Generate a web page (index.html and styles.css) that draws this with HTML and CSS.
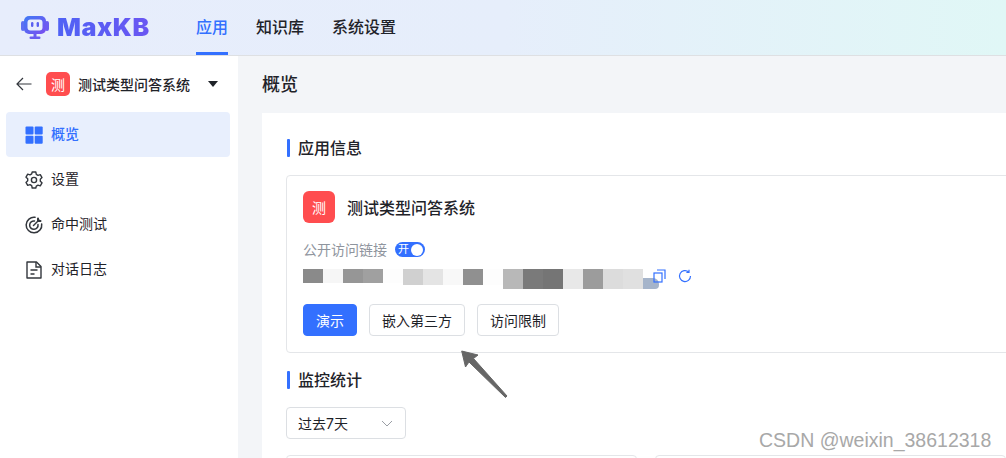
FILE: index.html
```html
<!DOCTYPE html>
<html lang="zh">
<head>
<meta charset="utf-8">
<title>MaxKB</title>
<link rel="stylesheet" href="styles.css">
</head>
<body>
<header class="topbar">
  <div class="logo">
    <svg class="logo-icon" width="30" height="26" viewBox="0 0 30 26">
      <defs><linearGradient id="lg" x1="0" y1="0" x2="1" y2="1"><stop offset="0" stop-color="#3f7bf5"/><stop offset="1" stop-color="#7b4df0"/></linearGradient></defs>
      <rect x="1" y="7" width="4" height="10" rx="2" fill="#5d6ff2"/>
      <rect x="25" y="7" width="4" height="10" rx="2" fill="#6a5cf0"/>
      <rect x="4" y="2" width="22" height="18" rx="5" fill="url(#lg)"/>
      <rect x="7.500" y="5.500" width="15" height="11" rx="3" fill="#e8eefc"/>
      <rect x="11" y="8" width="2.400" height="5" rx="1.200" fill="#5a60f0"/>
      <rect x="16.600" y="8" width="2.400" height="5" rx="1.200" fill="#5a60f0"/>
      <rect x="13.500" y="20" width="3" height="3" fill="#6a5cf0"/>
      <rect x="9.500" y="22.500" width="11" height="2.400" rx="1.200" fill="#6a5cf0"/>
    </svg>
    <span class="logo-text">MaxKB</span>
  </div>
  <nav class="topnav">
    <a class="topnav-item active">应用</a>
    <a class="topnav-item">知识库</a>
    <a class="topnav-item">系统设置</a>
  </nav>
</header>
<div class="body-row">
  <aside class="sidebar">
    <div class="app-switch">
      <svg class="back" width="16" height="14" viewBox="0 0 16 14"><path d="M15.500 7H1M7 1 1 7l6 6" fill="none" stroke="#33373d" stroke-width="1.200"/></svg>
      <span class="avatar small">测</span>
      <span class="app-name">测试类型问答系统</span>
      <span class="caret"></span>
    </div>
    <ul class="menu">
      <li class="menu-item selected">
        <svg width="18" height="18" viewBox="0 0 18 18"><g fill="#3370ff"><rect x="0.500" y="0.500" width="8" height="8" rx="1"/><rect x="9.700" y="0.500" width="8" height="8" rx="1"/><rect x="0.500" y="9.700" width="8" height="8" rx="1"/><rect x="9.700" y="9.700" width="8" height="8" rx="1"/></g></svg>
        <span class="menu-label">概览</span>
      </li>
      <li class="menu-item">
        <svg width="18" height="18" viewBox="0 0 18 18" fill="none" stroke="#33373d" stroke-width="1.400" stroke-linejoin="round"><path d="M7.200 1h3.600l.5 2.300 1.700 1 2.300-.7 1.700 3-1.700 1.600v2l1.700 1.600-1.700 3-2.300-.7-1.700 1L10.800 17H7.200l-.5-2.300-1.700-1-2.300.7-1.700-3 1.700-1.600v-2L1 6.200l1.700-3 2.300.7 1.700-1z"/><circle cx="9" cy="9" r="2.600"/></svg>
        <span class="menu-label">设置</span>
      </li>
      <li class="menu-item">
        <svg width="18" height="18" viewBox="0 0 18 18" fill="none" stroke="#33373d" stroke-width="1.500" stroke-linecap="round"><path d="M10 1.300A7.800 7.800 0 1 0 16.700 8"/><path d="M9.500 5A4.200 4.200 0 1 0 13 8.500"/><path d="M8.500 9.500 14 4"/><path d="M13 2.500v2.500h2.500" stroke-width="2"/></svg>
        <span class="menu-label">命中测试</span>
      </li>
      <li class="menu-item">
        <svg width="18" height="18" viewBox="0 0 18 18" fill="none" stroke="#33373d" stroke-width="1.400"><path d="M2 1h9.500L16 5.500V17H2z" stroke-linejoin="round"/><path d="M11 1v5h5M5.500 9h7M5.500 13h4"/></svg>
        <span class="menu-label">对话日志</span>
      </li>
    </ul>
  </aside>
  <main class="main">
    <h1 class="page-title">概览</h1>
    <section class="panel">
      <h2 class="section-title">应用信息</h2>
      <div class="card">
        <div class="card-head">
          <span class="avatar large">测</span>
          <span class="card-name">测试类型问答系统</span>
        </div>
        <div class="public-row">
          <span class="public-label">公开访问链接</span>
          <span class="switch"><span class="switch-text">开</span><span class="switch-knob"></span></span>
        </div>
        <div class="url-row">
          <div class="mosaic">
            <i class="m a"></i><i class="m b"></i><i class="m c"></i><i class="m d"></i><i class="m e"></i><i class="m f mid"></i><i class="m g mid"></i><i class="m h mid"></i><i class="m i mid"></i><i class="m e mid"></i><i class="m j tall"></i><i class="m k tall"></i><i class="m l tall"></i><i class="m n tall"></i><i class="m o tall"></i><i class="m p tall"></i><i class="m q tall"></i><i class="m r"></i>
          </div>
          <svg class="url-icon copy" width="13" height="14" viewBox="0 0 13 14" fill="none" stroke="#3370ff" stroke-width="1.200"><rect x="1" y="4" width="8" height="9"/><path d="M4 1h8v9"/></svg>
          <svg class="url-icon" width="14" height="14" viewBox="0 0 14 14" fill="none" stroke="#3370ff" stroke-width="1.200"><path d="M12.500 7A5.500 5.500 0 1 1 10.700 3"/><path d="M11 .8V3.400H8.400"/></svg>
        </div>
        <div class="actions">
          <button class="btn primary">演示</button>
          <button class="btn">嵌入第三方</button>
          <button class="btn">访问限制</button>
        </div>
      </div>
      <h2 class="section-title second">监控统计</h2>
      <div class="select">过去7天
        <svg width="12" height="7" viewBox="0 0 12 7" fill="none" stroke="#9a9ea5" stroke-width="1"><path d="M1 1l5 5 5-5"/></svg>
      </div>
      <div class="stats">
        <div class="stat"></div>
        <div class="stat"></div>
      </div>
    </section>
  </main>
</div>
<svg class="pointer" width="52" height="52" viewBox="0 0 52 52"><path d="M1.700 2 18 6l-4.500 3.500L47 47l-1.500 1.500L9 13l-3.500 5z" fill="#666" stroke="#666" stroke-width="1" stroke-linejoin="round"/></svg>
<div class="watermark">CSDN @weixin_38612318</div>
</body>
</html>
```
FILE: styles.css
```css
* { box-sizing: border-box; }
html, body { margin: 0; height: 100%; }
body {
  width: 1006px;
  height: 458px;
  overflow: hidden;
  position: relative;
  font-family: Inter, "Noto Sans CJK SC", sans-serif;
  color: #1f2329;
  background: #fff;
}
.topbar {
  height: 56px;
  display: flex;
  align-items: stretch;
  padding-left: 20px;
  background: linear-gradient(90deg, #e7edfc 0%, #e6eefb 50%, #e0f7f6 100%);
  border-bottom: 1px solid #dee0e3;
}
.logo { display: flex; align-items: center; width: 176px; gap: 7px; padding-bottom: 1px; }
.logo-icon { flex: none; }
.logo-text {
  font-size: 25px;
  font-weight: 900;
  letter-spacing: 0.6px;
  line-height: 30px;
  background: linear-gradient(90deg, #4f62f5, #6a56f2);
  -webkit-background-clip: text;
  background-clip: text;
  color: transparent;
}
.topnav { display: flex; gap: 28px; }
.topnav-item {
  font-size: 16px;
  line-height: 55px;
  color: #1f2329;
  height: 55px;
  border-bottom: 3px solid transparent;
  padding: 0;
  font-weight: 500;
}
.topnav-item.active { color: #3370ff; border-bottom-color: #3370ff; }
.body-row { display: flex; height: 402px; }
.sidebar { width: 238px; flex: none; background: #fff; padding: 0 8px 0 6px; }
.app-switch { height: 56px; display: flex; align-items: center; padding-left: 10px; }
.back { flex: none; margin-right: 14px; }
.avatar {
  display: inline-flex;
  align-items: center;
  justify-content: center;
  background: #ff4d4f;
  color: #fff;
  flex: none;
}
.avatar.small { width: 24px; height: 24px; border-radius: 5px; font-size: 14px; }
.avatar.large { width: 32px; height: 32px; border-radius: 6px; font-size: 14px; }
.app-name { font-size: 14px; margin-left: 8px; color: #1f2329; font-weight: 500; }
.caret {
  width: 0; height: 0;
  margin-left: 18px;
  border-left: 5.5px solid transparent;
  border-right: 5.5px solid transparent;
  border-top: 6px solid #1f2329;
}
.menu { list-style: none; margin: 0; padding: 0; }
.menu-item {
  height: 45px;
  display: flex;
  align-items: center;
  gap: 8px;
  padding-left: 19px;
  font-size: 14px;
  color: #1f2329;
  border-radius: 4px;
}
.menu-label { line-height: 20px; padding-bottom: 2px; }
.menu-item.selected { background: #e8effd; color: #3370ff; font-weight: 500; }
.main { flex: 1; min-width: 0; background: #f3f5f8; padding-left: 24px; overflow: hidden; }
.page-title { margin: 0; height: 57px; font-size: 18px; line-height: 58px; font-weight: 500; color: #1f2329; }
.panel { width: 800px; height: 400px; background: #fff; padding: 24px 24px 0; }
.section-title {
  margin: 0;
  font-size: 16px;
  line-height: 22px;
  font-weight: 500;
  height: 22px;
  padding-left: 12px;
  position: relative;
}
.section-title::before {
  content: "";
  position: absolute;
  left: 1px; top: 2px;
  width: 2.5px; height: 18px;
  background: #3370ff;
  border-radius: 1px;
}
.second { margin-top: 16px; }
.card {
  margin-top: 16px;
  height: 178px;
  width: 780px;
  border: 1px solid #e4e6e9;
  border-radius: 4px;
  padding: 15px 16px;
}
.card-head { display: flex; align-items: center; gap: 12px; height: 32px; }
.card-name { font-size: 16px; font-weight: 500; }
.public-row { display: flex; align-items: center; gap: 8px; margin-top: 16px; height: 20px; }
.public-label { font-size: 14px; color: #8f959e; }
.switch {
  width: 30px; height: 15px;
  margin-top: 1px;
  border-radius: 8px;
  background: #3370ff;
  display: flex;
  align-items: center;
  justify-content: space-between;
  padding: 0 2px 0 3px;
}
.switch-text { font-size: 11px; line-height: 15px; color: #fff; }
.switch-knob { width: 12px; height: 12px; border-radius: 50%; background: #fff; }
.url-row { display: flex; align-items: flex-start; height: 20px; margin-top: 10px; }
.mosaic { display: flex; width: 356px; height: 20px; }
.m { display: block; width: 20px; height: 14px; flex: none; }
.m.mid { height: 16px; }
.m.tall { height: 20px; }
.a { background: #8a8a8a; }
.b { background: #f6f6f6; }
.c { background: #969696; }
.d { background: #a0a0a0; }
.e { background: #fdfdfd; }
.f { background: #d0d0d0; }
.g { background: #e4e4e4; }
.h { background: #f8f8f8; }
.i { background: #909090; }
.j { background: #b8b8b8; }
.k { background: #7a7a7a; }
.l { background: #757575; }
.n { background: #e8e8e8; }
.o { background: #9c9c9c; }
.p { background: #dcdcdc; }
.q { background: #e0e0e0; }
.r { background: #a5b4ca; width: 16px; height: 11px; margin-top: 9px; border-radius: 0 6px 4px 0; }
.url-icon { flex: none; }
.copy { margin-left: -6px; margin-right: 12px; }
.actions { display: flex; gap: 12px; margin-top: 15px; }
.btn {
  height: 32px;
  padding: 0 12px;
  border: 1px solid #dcdfe3;
  border-radius: 4px;
  background: #fff;
  color: #1f2329;
  font: 14px Inter, "Noto Sans CJK SC", sans-serif;
}
.btn.primary { background: #3370ff; border-color: #3370ff; color: #fff; }
.select {
  margin-top: 16px;
  width: 120px; height: 32px;
  border: 1px solid #dcdfe3;
  border-radius: 4px;
  display: flex;
  align-items: center;
  justify-content: space-between;
  padding: 0 12px 0 11px;
  font-size: 14px;
}
.stats { display: flex; gap: 18px; margin-top: 16px; }
.stat { width: 351px; height: 60px; flex: none; border: 1px solid #e4e6e9; border-radius: 4px; }
.pointer { position: absolute; left: 460px; top: 349px; }
.watermark {
  position: absolute;
  left: 759px; top: 428px;
  font-family: "Liberation Sans", sans-serif;
  font-size: 19.5px;
  line-height: 24px;
  color: #a8a8a8;
  white-space: nowrap;
}
```
